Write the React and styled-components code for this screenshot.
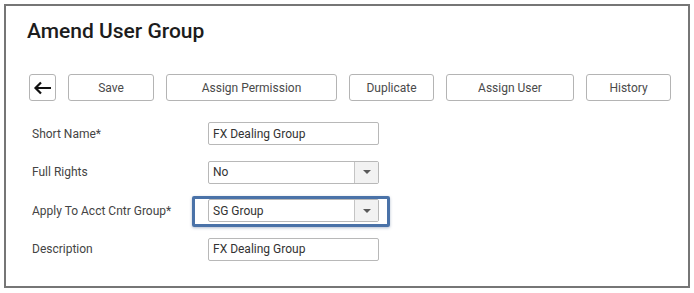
import React from "react";
import styled, { createGlobalStyle } from "styled-components";

const GlobalStyle = createGlobalStyle`
  html, body {
    margin: 0;
    padding: 0;
    background: #ffffff;
    font-family: Roboto, "Liberation Sans", Arial, sans-serif;
  }
`;

const Card = styled.div`
  box-sizing: border-box;
  margin: 4px;
  width: 686px;
  height: 284px;
  border: 2px solid #767676;
  padding: 13px 0 0 21px;
`;

const Title = styled.h1`
  margin: 0;
  font-size: 21px;
  line-height: 25px;
  font-weight: 500;
  color: #1c1c1c;
`;

const Toolbar = styled.div`
  display: flex;
  gap: 12px;
  margin: 30px 0 0 2px;
`;

const Button = styled.button`
  box-sizing: border-box;
  height: 27px;
  width: ${(p) => p.$w}px;
  border: 1px solid #b4b4b4;
  border-radius: 3px;
  background: #ffffff;
  color: #4a4a4a;
  font-family: Roboto, "Liberation Sans", Arial, sans-serif;
  font-size: 12px;
  padding: 0;
  display: flex;
  align-items: center;
  justify-content: center;
  cursor: pointer;
`;

const Form = styled.div`
  display: grid;
  grid-template-columns: 176px 171px;
  grid-auto-rows: 23px;
  row-gap: 15.67px;
  margin: 21px 0 0 5px;
  align-items: center;
`;

const Label = styled.label`
  font-size: 12px;
  color: #444444;
`;

const Field = styled.div`
  position: relative;
  box-sizing: border-box;
  height: 23px;
  border: 1px solid #b8b8b8;
  border-radius: 2px;
  background: #ffffff;
  display: flex;
  align-items: stretch;
`;

const Value = styled.div`
  flex: 1;
  display: flex;
  align-items: center;
  padding-left: 4px;
  font-size: 12px;
  color: #333333;
`;

const Caret = styled.div`
  width: 23px;
  border-left: 1px solid #c4c4c4;
  background: #f2f2f2;
  display: flex;
  align-items: center;
  justify-content: center;
  &::after {
    content: "";
    border-left: 4px solid transparent;
    border-right: 4px solid transparent;
    border-top: 4px solid #5a5a5a;
  }
`;

const Highlight = styled.div`
  position: absolute;
  left: -17px;
  right: -12px;
  top: -4px;
  bottom: -6px;
  border: 3px solid #4a72a8;
  border-radius: 2px;
  box-shadow: 0 1px 3px rgba(40, 70, 120, 0.35);
  pointer-events: none;
`;

const BackArrow = () => (
  <svg width="19" height="14" viewBox="0 0 19 14">
    <path d="M18 7H2.5M8 1.5L2.5 7L8 12.5" fill="none" stroke="#111" strokeWidth="2.2" />
  </svg>
);

const buttons = [
  ["Save", 86],
  ["Assign Permission", 171],
  ["Duplicate", 85],
  ["Assign User", 128],
  ["History", 85],
];

const rows = [
  { label: "Short Name*", value: "FX Dealing Group" },
  { label: "Full Rights", value: "No", select: true },
  { label: "Apply To Acct Cntr Group*", value: "SG Group", select: true, focus: true },
  { label: "Description", value: "FX Dealing Group" },
];

export default function App() {
  return (
    <>
      <GlobalStyle />
      <Card>
        <Title>Amend User Group</Title>
        <Toolbar>
          <Button $w={27}>
            <BackArrow />
          </Button>
          {buttons.map(([text, w]) => (
            <Button key={text} $w={w}>
              {text}
            </Button>
          ))}
        </Toolbar>
        <Form>
          {rows.map((r) => (
            <React.Fragment key={r.label}>
              <Label>{r.label}</Label>
              <Field>
                <Value>{r.value}</Value>
                {r.select && <Caret />}
                {r.focus && <Highlight />}
              </Field>
            </React.Fragment>
          ))}
        </Form>
      </Card>
    </>
  );
}
